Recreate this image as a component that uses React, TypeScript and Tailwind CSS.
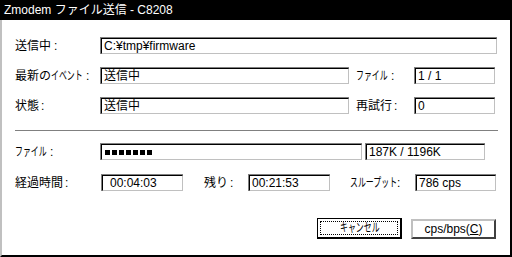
import React from "react";

const font = { fontFamily: '"Liberation Sans", "Noto Sans CJK JP", sans-serif' };

function Box({ w, children, pl = "pl-[2px]" }: { w: string; children?: React.ReactNode; pl?: string }) {
  return (
    <div className={`${w} h-[17px] border-t border-l border-[#808080] shrink-0`}>
      <div className={`h-full w-full border-t border-l border-black border-r border-b border-r-[#c0c0c0] border-b-[#c0c0c0] bg-white flex items-center ${pl} text-[12px] leading-none text-black whitespace-nowrap`}>
        {children}
      </div>
    </div>
  );
}

function Label({ w, children, className = "" }: { w: string; children: React.ReactNode; className?: string }) {
  return <div className={`${w} shrink-0 text-[12px] leading-none text-black flex items-center whitespace-nowrap ${className}`}>{children}</div>;
}

function Kana({ w, children }: { w: string; children: React.ReactNode }) {
  return (
    <span className={`inline-block ${w} overflow-visible whitespace-nowrap`}>
      <span className="inline-block origin-left scale-x-[0.66]">{children}</span>
    </span>
  );
}

export default function App() {
  return (
    <div style={font} className="w-[512px] h-[257px] bg-white flex flex-col overflow-hidden">
      <div className="h-[20px] bg-black text-white text-[12px] leading-none flex items-center pl-[4px] shrink-0">
        Zmodem ファイル送信 - C8208
      </div>
      <div className="flex-1 flex flex-col border-l-2 border-l-[#c0c0c0] border-r-2 border-r-black border-b-2 border-b-black pl-[13px]">
        <div className="mt-[17px] flex items-center">
          <Label w="w-[85px]">送信中<span className="ml-[3px]">:</span></Label>
          <Box w="w-[397px]">C:¥tmp¥firmware</Box>
        </div>
        <div className="mt-[13px] flex items-center">
          <Label w="w-[85px]">
            最新の<Kana w="w-[33px]">イベント</Kana>
            <span className="ml-[2px]">:</span>
          </Label>
          <Box w="w-[249px]">送信中</Box>
          <Label w="w-[58px]" className="ml-[7px]">
            <Kana w="w-[33px]">ファイル</Kana>
            <span className="ml-[2px]">:</span>
          </Label>
          <Box w="w-[81px]">1 / 1</Box>
        </div>
        <div className="mt-[13px] flex items-center">
          <Label w="w-[85px]">状態<span className="ml-[2px]">:</span></Label>
          <Box w="w-[249px]">送信中</Box>
          <Label w="w-[58px]" className="ml-[7px]">再試行<span className="ml-[2px]">:</span></Label>
          <Box w="w-[81px]">0</Box>
        </div>
        <div className="mt-[16px] w-[483px] h-[2px] border-t border-t-[#808080] border-b border-b-white" />
        <div className="mt-[11px] flex items-center">
          <Label w="w-[85px]">
            <Kana w="w-[33px]">ファイル</Kana>
            <span className="ml-[2px]">:</span>
          </Label>
          <Box w="w-[262px]" pl="pl-[3px]">
            <div className="flex gap-[2px]">
              {Array.from({ length: 7 }).map((_, i) => (
                <div key={i} className="w-[5px] h-[5px] bg-black" />
              ))}
            </div>
          </Box>
          <div className="ml-[3px]">
            <Box w="w-[120px]">187K / 1196K</Box>
          </div>
        </div>
        <div className="mt-[14px] flex items-center">
          <Label w="w-[86px]">経過時間<span className="ml-[2px]">:</span></Label>
          <Box w="w-[82px]" pl="pl-[7px]">00:04:03</Box>
          <Label w="w-[44px]" className="ml-[21px]">残り<span className="ml-[2px]">:</span></Label>
          <Box w="w-[82px]" pl="pl-[2px]">00:21:53</Box>
          <Label w="w-[65px]" className="ml-[20px]">
            <Kana w="w-[45px]">スループット</Kana>
            <span className="ml-[2px]">:</span>
          </Label>
          <Box w="w-[81px]">786 cps</Box>
        </div>
        <div className="mt-[27px] flex items-center">
          <div className="ml-[302px] w-[85px] h-[21px] border border-r-2 border-b-2 border-black bg-white flex items-center justify-center p-[2px]">
            <div className="w-full h-full border border-dotted border-black flex items-center justify-center text-[12px] leading-none">
              <Kana w="w-[38px]">キャンセル</Kana>
            </div>
          </div>
          <div className="ml-[9px] w-[85px] h-[20px] border-t-2 border-l-2 border-[#c0c0c0] border-b-2 border-r-2 border-b-[#404040] border-r-[#404040] bg-white flex items-center justify-center text-[12px] leading-none">
            cps/bps(<span className="underline">C</span>)
          </div>
        </div>
      </div>
    </div>
  );
}
